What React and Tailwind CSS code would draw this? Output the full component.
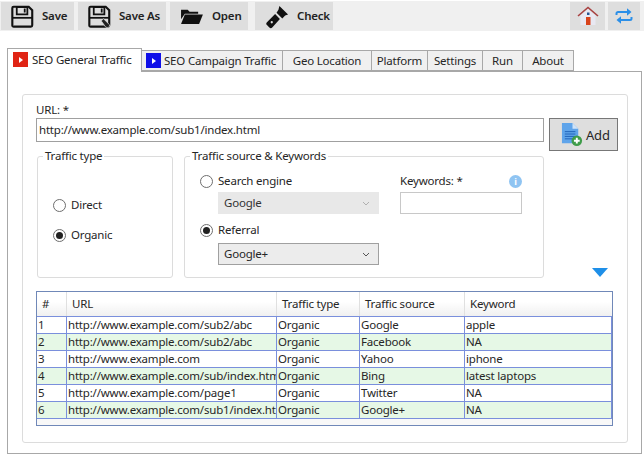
import React from "react";

const Floppy = ({ pen }) => (
  <svg width="23" height="23" viewBox="0 0 26 26" className="shrink-0">
    <path d="M3 2h17l4 4v17a1.500 1.500 0 0 1-1.500 1.500h-19A1.500 1.500 0 0 1 1.500 23V3.500A1.500 1.500 0 0 1 3 2z" fill="none" stroke="#111" strokeWidth="2.400" />
    <path d="M6.500 2.500h12v8h-12z" fill="none" stroke="#111" strokeWidth="2" />
    <rect x="14.500" y="4" width="2" height="4.500" fill="#111" />
    <path d="M1.500 14.500h23" stroke="#111" strokeWidth="2" />
    {pen && <path d="M15 18l2.500-2.500 7 7-1 3.500-3.500-1z" fill="#222" stroke="#e0e0e0" strokeWidth="0.800" />}
  </svg>
);

const Folder = () => (
  <svg width="23" height="19" viewBox="0 0 24 20" className="shrink-0">
    <path d="M1 3h7l2 2h9v2H5L1 13z" fill="#111" />
    <path d="M5 8h19l-4 10H1z" fill="#111" />
  </svg>
);

const Torch = () => (
  <svg width="23" height="25" viewBox="0 0 24 26" className="shrink-0">
    <path d="M14 2l9 9-3 1-3 3-6-6 2-3z" fill="#111" />
    <path d="M9.500 10.500l5 5-8 9c-1 1-2 1-3 0l-2.500-2.500c-1-1-1-2 0-3z" fill="#111" />
    <circle cx="6" cy="19" r="1.200" fill="#ddd" />
  </svg>
);

const Home = () => (
  <svg width="22" height="20" viewBox="0 0 22 20">
    <path d="M3.500 9.500L11 3l7.500 6.500V19h-15z" fill="#e8e8f2" />
    <path d="M1 10L11 1.500 21 10" fill="none" stroke="#a84040" strokeWidth="1.600" />
    <rect x="9" y="11" width="4.500" height="8" fill="#d8431c" />
    <rect x="10" y="6.500" width="2.500" height="2.500" fill="#2a5590" />
  </svg>
);

const Sync = () => (
  <svg width="18" height="18" viewBox="0 0 18 18">
    <path d="M1.500 8V6.500A1.500 1.500 0 0 1 3 5h12" fill="none" stroke="#2b8fe8" strokeWidth="2" />
    <path d="M12 1.200L16.500 5 12 8.800z" fill="#2b8fe8" />
    <path d="M16.500 10v1.500A1.500 1.500 0 0 1 15 13H3" fill="none" stroke="#2b8fe8" strokeWidth="2" />
    <path d="M6 9.200L1.500 13 6 16.800z" fill="#2b8fe8" />
  </svg>
);

const DocAdd = () => (
  <svg width="23" height="25" viewBox="0 0 24 26" className="shrink-0">
    <path d="M1 1h11l6 6v15H1z" fill="#5fa4ea" />
    <path d="M12 1l6 6h-6z" fill="#cfe3f8" />
    <path d="M4 10h11M4 12.500h11M4 15h11M4 17.500h8" stroke="#1f62b8" strokeWidth="1" />
    <circle cx="16.500" cy="19.500" r="5.500" fill="#3f9c4a" />
    <path d="M16.500 16.500v6M13.500 19.500h6" stroke="#fff" strokeWidth="2" />
  </svg>
);

const Flag = ({ color }) => (
  <span className={`flex h-[15px] w-[15px] shrink-0 items-center justify-center ${color}`}>
    <span className="h-0 w-0 border-y-[3px] border-l-[4px] border-y-transparent border-l-white" />
  </span>
);

const Radio = ({ checked, label }) => (
  <div className="flex items-center gap-[5px]">
    <span className="flex h-[13px] w-[13px] items-center justify-center rounded-full border border-[#6e6e6e] bg-white">
      {checked && <span className="h-[7px] w-[7px] rounded-full bg-[#222]" />}
    </span>
    <span>{label}</span>
  </div>
);

const Chevron = ({ color }) => (
  <svg width="8" height="5" viewBox="0 0 8 5">
    <path d="M1 1l3 3 3-3" fill="none" stroke={color} strokeWidth="1" />
  </svg>
);

const ToolButton = ({ icon, label, className }) => (
  <div className={`flex h-[28px] items-center bg-[#dedede] font-semibold text-[#222] ${className}`}>
    {icon}
    <span>{label}</span>
  </div>
);

const tabs = ["Geo Location", "Platform", "Settings", "Run", "About"];
const tabWidths = ["w-[89px]", "w-[56px]", "w-[55px]", "w-[40px]", "w-[51px]"];

const columns = [
  ["#", "w-[30px]"],
  ["URL", "w-[210px]"],
  ["Traffic type", "w-[83px]"],
  ["Traffic source", "w-[105px]"],
  ["Keyword", "flex-1"],
];

const rows = [
  ["1", "http://www.example.com/sub2/abc", "Organic", "Google", "apple"],
  ["2", "http://www.example.com/sub2/abc", "Organic", "Facebook", "NA"],
  ["3", "http://www.example.com", "Organic", "Yahoo", "iphone"],
  ["4", "http://www.example.com/sub/index.html", "Organic", "Bing", "latest laptops"],
  ["5", "http://www.example.com/page1", "Organic", "Twitter", "NA"],
  ["6", "http://www.example.com/sub1/index.html", "Organic", "Google+", "NA"],
];

export default function App() {
  return (
    <div className="h-[463px] w-[644px] overflow-hidden bg-white text-[11.5px] leading-[16px] tracking-[-0.2px] text-[#262626] [font-family:'Noto_Sans','Open_Sans',sans-serif]">
      <div className="mt-px flex h-[30px] items-center justify-between bg-[#f0f0f0] pl-px pr-[4px]">
        <div className="flex items-center">
          <ToolButton icon={<Floppy />} label="Save" className="w-[73px] gap-[8px] pl-[10px]" />
          <ToolButton icon={<Floppy pen />} label="Save As" className="ml-[4px] w-[88px] gap-[8px] pl-[10px]" />
          <ToolButton icon={<Folder />} label="Open" className="ml-[4px] w-[78px] gap-[9px] pl-[10px]" />
          <ToolButton icon={<Torch />} label="Check" className="ml-[7px] w-[78px] gap-[8px] pl-[11px]" />
        </div>
        <div className="flex items-center gap-[3px]">
          <div className="flex h-[28px] w-[35px] items-center justify-center bg-[#dedede]"><Home /></div>
          <div className="flex h-[28px] w-[32px] items-center justify-center bg-[#dedede]"><Sync /></div>
        </div>
      </div>

      <div className="mt-[17px] flex items-end whitespace-nowrap pl-[7px]">
        <div className="relative z-10 -mb-px flex h-[24px] w-[135px] items-center gap-[4px] border border-b-0 border-[#a8a8a8] bg-white pb-[2px] pl-[5px]">
          <Flag color="bg-[#e02414]" />
          <span>SEO General Traffic</span>
        </div>
        <div className="flex h-[21px] w-[141px] items-center gap-[3px] border border-l-0 border-[#a8a8a8] bg-[#f0f0f0] pl-[4px]">
          <Flag color="bg-[#1010e8]" />
          <span>SEO Campaign Traffic</span>
        </div>
        {tabs.map((t, i) => (
          <div key={t} className={`flex h-[21px] items-center justify-center border border-l-0 border-[#a8a8a8] bg-[#f0f0f0] ${tabWidths[i]}`}>
            {t}
          </div>
        ))}
      </div>

      <div className="ml-[7px] h-[383px] w-[635px] border border-[#a8a8a8] px-[14px] pt-[22px]">
        <div className="h-[349px] w-[606px] rounded-[3px] border border-[#dcdcdc] pl-[13px] pr-[8px] pt-[8px]">
          <div className="flex">
            <div className="w-[508px] shrink-0">
              <div className="h-[15px] leading-[14px]">URL: *</div>
              <div className="flex h-[24px] items-center border border-[#a0a0a0] pl-[2px]">http://www.example.com/sub1/index.html</div>
            </div>
            <div className="ml-[5px] mt-[15px] flex h-[33px] w-[69px] shrink-0 items-center gap-[2px] border border-[#777] bg-[#dedede] pl-[11px]">
              <DocAdd />
              <span className="text-[13px]">Add</span>
            </div>
          </div>

          <div className="-mt-[2px] flex">
            <fieldset className="ml-px h-[129px] w-[136px] shrink-0 rounded-[3px] border border-[#dcdcdc] px-[15px]">
              <legend className="-ml-[10px] px-[2px] leading-[14px]">Traffic type</legend>
              <div className="mt-[34px] flex flex-col gap-[14px]">
                <Radio label="Direct" />
                <Radio checked label="Organic" />
              </div>
            </fieldset>
            <fieldset className="ml-[11px] h-[129px] w-[360px] shrink-0 rounded-[3px] border border-[#dcdcdc] pl-[15px]">
              <legend className="-ml-[10px] px-[2px] leading-[14px]">Traffic source &amp; Keywords</legend>
              <div className="flex">
                <div className="w-[181px] pt-[10px]">
                  <Radio label="Search engine" />
                  <div className="ml-[18px] mt-[3px] flex h-[22px] w-[161px] items-center justify-between bg-[#e8e8e8] pl-[6px] pr-[9px] text-[#333]">
                    <span>Google</span>
                    <Chevron color="#b0b0b0" />
                  </div>
                  <div className="mt-[8px]"><Radio checked label="Referral" /></div>
                  <div className="ml-[18px] mt-[5px] flex h-[22px] w-[161px] items-center justify-between border border-[#a0a0a0] bg-[#ececec] pl-[5px] pr-[8px]">
                    <span>Google+</span>
                    <Chevron color="#555" />
                  </div>
                </div>
                <div className="ml-[19px] w-[122px] pt-[10px]">
                  <div className="flex h-[16px] items-center justify-between">
                    <span>Keywords: *</span>
                    <span className="flex h-[13px] w-[13px] items-center justify-center rounded-full bg-[#8fc4f2] text-[9px] font-bold leading-none text-white">i</span>
                  </div>
                  <div className="mt-[3px] h-[22px] border border-[#c8c8c8] bg-white" />
                </div>
              </div>
            </fieldset>
            <div className="ml-[48px] mt-[119px] h-0 w-0 shrink-0 border-x-[8px] border-t-[9px] border-x-transparent border-t-[#1e8fe8]" />
          </div>

          <div className="mt-[13px] h-[135px] w-[577px] border border-[#7088b8] bg-[#f8f8f8]">
            <div className="flex h-[24px] bg-gradient-to-b from-white from-40% to-[#f0f0f0]">
              {columns.map(([name, w]) => (
                <div key={name} className={`flex items-center border-r border-[#e0e0e0] pl-[5px] last:border-r-0 ${w}`}>
                  {name}
                </div>
              ))}
            </div>
            {rows.map((r, idx) => (
              <div key={r[0]} className={`flex h-[17px] border-t border-[#7a8fdc] ${idx % 2 ? "bg-[#e6f8e6]" : "bg-white"}`}>
                {r.map((c, i) => (
                  <div key={i} className={`overflow-hidden whitespace-nowrap border-r border-[#7a8fdc] pl-px leading-[16px] ${columns[i][1]}`}>
                    {c}
                  </div>
                ))}
              </div>
            ))}
            <div className="border-t border-[#7a8fdc]" />
          </div>
        </div>
      </div>
    </div>
  );
}
